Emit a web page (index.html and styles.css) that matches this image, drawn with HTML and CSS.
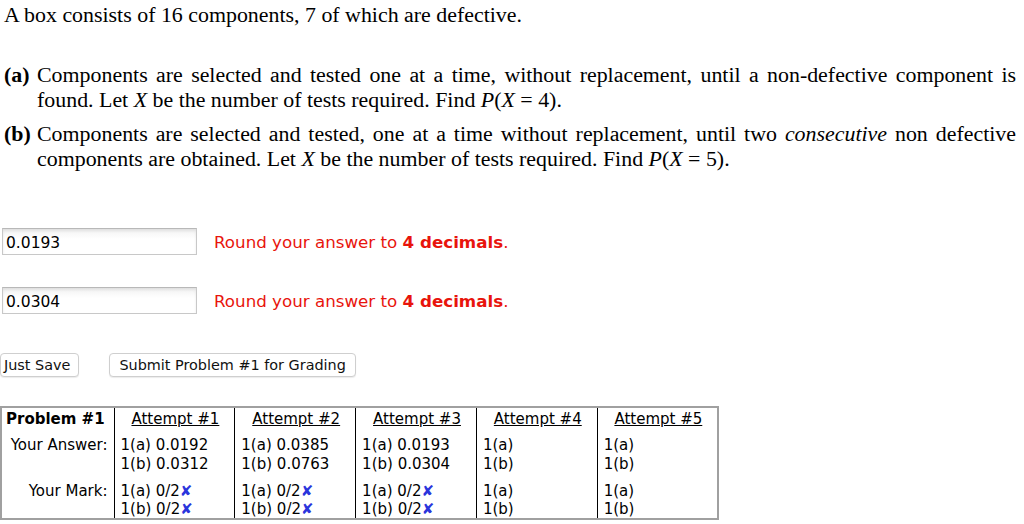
FILE: index.html
```html
<!DOCTYPE html>
<html lang="en">
<head>
  <meta charset="utf-8">
  <title>Problem 1</title>
  <link rel="stylesheet" href="styles.css">
</head>
<body>
  <div class="problem">
    <p class="intro">A box consists of 16 components, 7 of which are defective.</p>

    <div class="part">
      <span class="label">(a)</span>
      <p class="text">Components are selected and tested one at a time, without replacement, until a non-defective component is found. Let <i>X</i> be the number of tests required. Find <i>P</i>(<i>X</i> = 4).</p>
    </div>
    <div class="part">
      <span class="label">(b)</span>
      <p class="text">Components are selected and tested, one at a time without replacement, until two <i>consecutive</i> non defective components are obtained. Let <i>X</i> be the number of tests required. Find <i>P</i>(<i>X</i> = 5).</p>
    </div>
  </div>

  <!-- Respostas -->
  <div class="answers">
    <div class="answer-row">
      <input class="answer" type="text" value="0.0193">
      <span class="hint">Round your answer to <b>4 decimals</b>.</span>
    </div>
    <div class="answer-row">
      <input class="answer" type="text" value="0.0304">
      <span class="hint">Round your answer to <b>4 decimals</b>.</span>
    </div>
  </div>

  <div class="buttons">
    <button class="btn">Just Save</button>
    <button class="btn">Submit Problem #1 for Grading</button>
  </div>

  <!-- Tentativas -->
  <table class="attempts">
    <colgroup>
      <col class="c-label">
      <col><col><col><col><col>
    </colgroup>
    <tr class="head">
      <th class="rowlabel">Problem #1</th>
      <td><u>Attempt #1</u></td>
      <td><u>Attempt #2</u></td>
      <td><u>Attempt #3</u></td>
      <td><u>Attempt #4</u></td>
      <td><u>Attempt #5</u></td>
    </tr>
    <tr class="ans">
      <td class="rowlabel">Your Answer:</td>
      <td>1(a) 0.0192<br>1(b) 0.0312</td>
      <td>1(a) 0.0385<br>1(b) 0.0763</td>
      <td>1(a) 0.0193<br>1(b) 0.0304</td>
      <td>1(a)<br>1(b)</td>
      <td>1(a)<br>1(b)</td>
    </tr>
    <tr class="mark">
      <td class="rowlabel">Your Mark:</td>
      <td>1(a) 0/2<span class="wrong">✘</span><br>1(b) 0/2<span class="wrong">✘</span></td>
      <td>1(a) 0/2<span class="wrong">✘</span><br>1(b) 0/2<span class="wrong">✘</span></td>
      <td>1(a) 0/2<span class="wrong">✘</span><br>1(b) 0/2<span class="wrong">✘</span></td>
      <td>1(a)<br>1(b)</td>
      <td>1(a)<br>1(b)</td>
    </tr>
  </table>
</body>
</html>
```

FILE: styles.css
```css
* { box-sizing: border-box; margin: 0; padding: 0; }
:root {
  --fg: #000;
  --red: #e8140c;
  --blue: #2a35dc;
  --border: #a0a0a0;
}
body {
  background: #fff;
  color: var(--fg);
  font-family: 'DejaVu Sans', Verdana, sans-serif;
  font-size: 15px;
}

/* Enunciado */
.problem {
  font-family: 'Liberation Serif', 'Times New Roman', serif;
  font-size: 21.9px;
  line-height: 25px;
  padding: 2px 8px 0 4px;
}
.intro {
  margin-bottom: 35px;
}
.part {
  display: flex;
  margin-bottom: 9px;
}
.label {
  font-weight: bold;
  width: 33px;
  flex-shrink: 0;
}
.text {
  text-align: justify;
}

/* Campos de resposta */
.answers {
  margin-top: 57px;
  padding-left: 2px;
}
.answer-row {
  display: flex;
  align-items: center;
  gap: 17px;
  margin-bottom: 32px;
}
.answer {
  width: 195px;
  height: 27px;
  border: 1px solid #c8c8c8;
  border-top-color: #b8b8b8;
  box-shadow: inset 0 2px 3px rgba(0,0,0,0.08);
  background: linear-gradient(#f2f2f2, #fff 40%);
  font-family: 'DejaVu Sans', Verdana, sans-serif;
  font-size: 15.5px;
  padding: 2px 3px 0;
  color: #000;
}
.hint {
  color: var(--red);
  font-size: 16.7px;
}

/* Botões (margem colapsa com a última linha de resposta) */
.buttons {
  display: flex;
  gap: 30px;
  margin-top: 39px;
}
.btn {
  font-family: 'DejaVu Sans', Verdana, sans-serif;
  font-size: 14.4px;
  background: #fff;
  border: 1px solid #cfcfcf;
  border-radius: 4px;
  box-shadow: 0 1px 1px rgba(0,0,0,0.08);
  padding: 1px 8px 2px 3px;
  height: 24px;
  color: #111;
}
.btn + .btn {
  padding: 1px 9px 2px 9px;
}

/* Tabela de tentativas */
.attempts {
  margin-top: 29px;
  width: 719px;
  table-layout: fixed;
  border-collapse: collapse;
  border: 2px solid var(--border);
  line-height: 19px;
}
.attempts .c-label {
  width: 113px;
}
.attempts td, .attempts th {
  border-left: 1px solid #000;
  padding: 2px 4px 3px 6px;
  text-align: left;
  vertical-align: top;
  white-space: nowrap;
}
.attempts .head td, .attempts .head th {
  text-align: center;
  padding-bottom: 5px;
}
.attempts .ans td {
  padding-bottom: 5px;
}
.attempts .mark td {
  line-height: 18px;
  padding-top: 3px;
  padding-bottom: 0;
}
.attempts .rowlabel {
  border-left: none;
  text-align: right;
  padding-left: 2px;
  padding-right: 6px;
}
.attempts th.rowlabel {
  text-align: left;
  padding-left: 4px;
  font-weight: bold;
}
.wrong {
  color: var(--blue);
  font-weight: bold;
}
```
